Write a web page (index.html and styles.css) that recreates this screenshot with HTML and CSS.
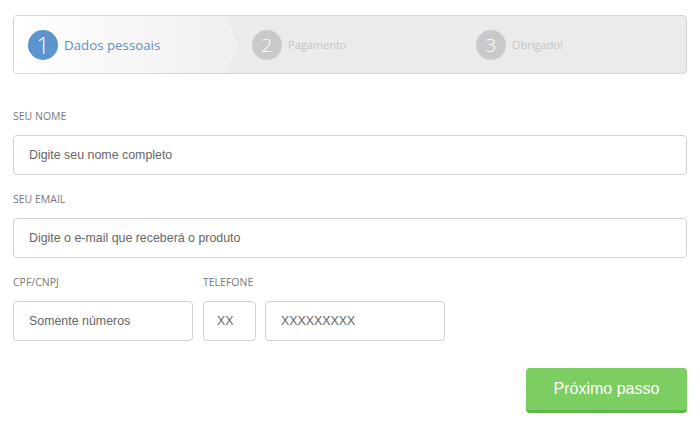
FILE: index.html
```html
<!DOCTYPE html>
<html lang="pt-BR">
	<head>
		<meta charset="UTF-8" />
		<meta name="viewport" content="width=device-width, initial-scale=1.0" />
		<title>Checkout</title>
		<link rel="stylesheet" href="styles.css">
	</head>
	<body>
		<div class="steps">
			<div class="step active">
				<span class="num">1</span>
				<span class="step-name">Dados pessoais</span>
			</div>
			<div class="step">
				<span class="num">2</span>
				<span class="step-name">Pagamento</span>
			</div>
			<div class="step">
				<span class="num">3</span>
				<span class="step-name">Obrigado!</span>
			</div>
		</div>

		<form class="form">
			<label class="label" for="nome">Seu nome</label>
			<input class="field" id="nome" type="text" placeholder="Digite seu nome completo">

			<label class="label" for="email">Seu email</label>
			<input class="field" id="email" type="text" placeholder="Digite o e-mail que receberá o produto">

			<div class="row">
				<div class="group">
					<label class="label" for="doc">CPF/CNPJ</label>
					<input class="field doc" id="doc" type="text" placeholder="Somente números">
				</div>
				<div class="group">
					<label class="label" for="ddd">Telefone</label>
					<div class="phone">
						<input class="field ddd" id="ddd" type="text" placeholder="XX">
						<input class="field tel" type="text" placeholder="XXXXXXXXX">
					</div>
				</div>
			</div>

			<div class="actions">
				<button class="next" type="button">Próximo passo</button>
			</div>
		</form>
	</body>
</html>
```

FILE: styles.css
```css
body {
	margin: 0;
	padding: 15px 13px;
	background: #fff;
	font-family: "Open Sans", Arial, sans-serif;
}
.steps {
	display: flex;
	height: 57px;
	border: 1px solid #d6d6d6;
	border-radius: 4px;
	background: #ebebeb;
	overflow: hidden;
}
.step {
	display: flex;
	align-items: center;
	width: 224px;
	padding-left: 14px;
	box-sizing: border-box;
}
.step.active {
	background: linear-gradient(to right, #fff, #efefef);
	clip-path: polygon(0 0, calc(100% - 12px) 0, 100% 50%, calc(100% - 12px) 100%, 0 100%);
}
.num {
	display: flex;
	align-items: center;
	justify-content: center;
	width: 30px;
	height: 30px;
	border-radius: 50%;
	background: #c9c9c9;
	color: #fff;
	font-size: 19px;
	font-weight: 300;
}
.step.active .num {
	background: #5b95cf;
	font-size: 23px;
}
.step-name {
	margin-left: 6px;
	font-size: 11px;
	color: #c4c4c4;
}
.step.active .step-name {
	font-size: 13.3px;
	color: #5d8fc8;
}
.form {
	margin-top: 35px;
}
.label {
	display: block;
	height: 14px;
	line-height: 14px;
	margin-bottom: 12px;
	font-size: 10.5px;
	text-transform: uppercase;
	color: #777;
}
.field {
	display: block;
	width: 100%;
	height: 40px;
	box-sizing: border-box;
	padding: 0 15px;
	border: 1px solid #d2d2d2;
	border-radius: 4px;
	font-family: "Liberation Sans", Arial, sans-serif;
	font-size: 12.4px;
	color: #555;
	margin-bottom: 17px;
}
.field::placeholder {
	color: #666;
}
.row {
	display: flex;
	gap: 10px;
}
.doc {
	width: 180px;
}
.phone {
	display: flex;
	gap: 9px;
}
.ddd {
	width: 53px;
	padding: 0 13px;
}
.tel {
	width: 180px;
}
.actions {
	display: flex;
	justify-content: flex-end;
	margin-top: 10px;
}
.next {
	width: 161px;
	height: 45px;
	border: none;
	border-bottom: 3px solid #62b44c;
	border-radius: 4px;
	background: #7ccd62;
	color: #fff;
	font-family: "Liberation Sans", Arial, sans-serif;
	font-size: 16px;
	cursor: pointer;
}
```
